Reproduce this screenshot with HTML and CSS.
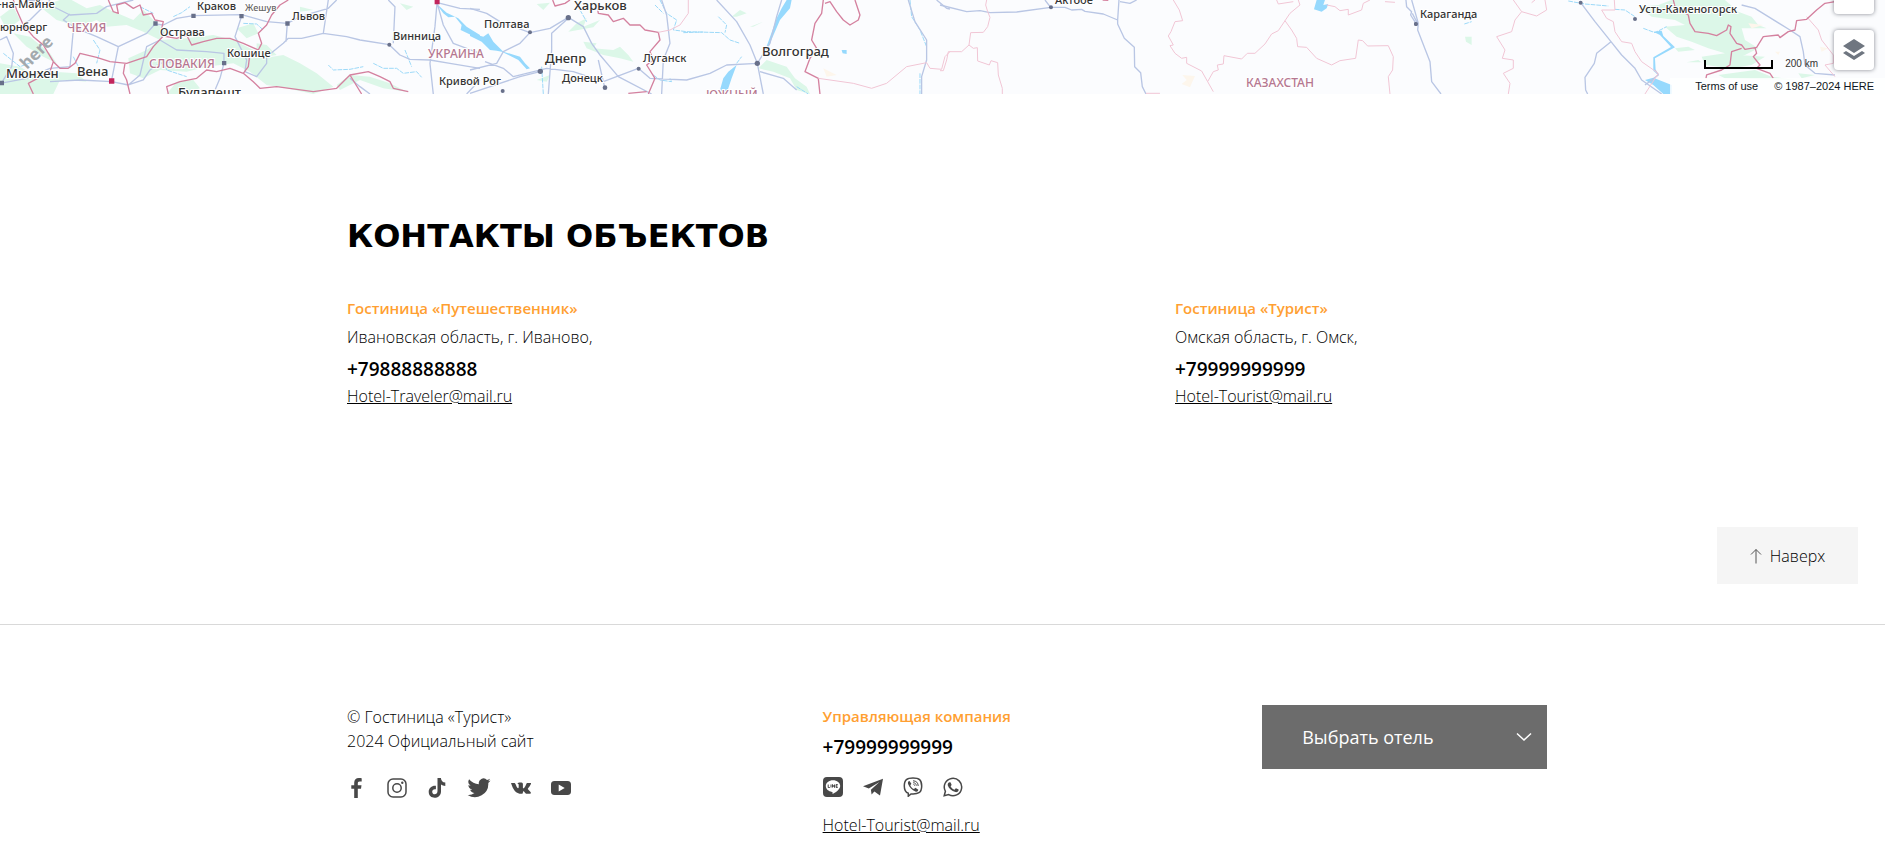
FILE: index.html
```html
<!DOCTYPE html>
<html lang="ru">
<head>
<meta charset="utf-8">
<title>Контакты объектов</title>
<link rel="stylesheet" href="styles.css">
</head>
<body>
<section class="map" aria-label="Карта">
  <svg class="map-canvas" viewBox="0 0 1885 94" preserveAspectRatio="xMinYMin slice">
    <!-- Central Europe -->
    <g transform="scale(.3333)">
      <g class="land">
        <path d="M0 50L40 20 60 60 20 90ZM120 20L180 0H215L260 25 300 15 330 30 400 60 430 30 470 70 500 95 480 120 430 95 380 75 320 80 290 60 240 80 170 60ZM40 100L90 110 150 160 170 190 130 170 80 140ZM0 190L60 200 110 230 160 215 230 220 260 245 200 240 130 250 100 282H0ZM100 245L180 240 160 282H95ZM385 175L440 150 480 120 560 115 640 105 700 120 760 150 790 175 850 165 900 190 950 220 1000 260 940 282 860 265 800 255 750 215 700 190 620 200 560 215 480 210 430 235 390 220ZM710 85L760 70 775 100 740 115ZM770 130L800 135 830 165 770 175ZM1010 255L1050 225 1110 230 1170 250 1220 275 1150 265 1080 240 1020 270ZM530 245L580 240 600 265 550 282H500ZM900 20L940 30 900 35ZM1200 10L1240 20 1220 30Z"/>
      </g>
      <g class="water-line"><path d="M520 50L545 38 570 20M730 70L770 72 790 90M985 195L1000 210 1050 208 1090 200M1120 190L1150 205 1190 205 1210 220 1250 215 1265 232M280 120L300 150 290 190M220 170L240 210M420 20L460 40M490 180L500 210 560 230M10 160L60 200 100 185M1215 150L1235 200"/></g>
      <path class="water" d="M1308 10L1330 40 1345 52 1365 50 1385 75 1382 90 1440 118V105L1400 80 1375 55 1340 38Z"/>
      <g class="road">
        <path d="M0 85L40 90 90 60 130 20 150 0M80 0L130 5 180 30 210 45 290 40 320 20 400 0M210 42L190 60 230 85 290 110 355 140 440 100 465 72 490 75 530 55 580 47 725 44 765 55 800 65 862 70 900 50 985 25 1010 0M0 250L80 235 150 205 210 200 220 90M150 245L240 240 335 245 385 255 430 240 450 210 480 190 540 180M355 140L335 240M385 255L420 225 440 140 480 120 530 150 620 155 672 160 672 190 660 235 640 282M725 48L705 110 740 180 735 215 770 230 800 190 800 170 850 130 865 115 905 115 970 100 985 0M862 70L858 125M970 100L1040 110 1080 120 1168 134 1200 165 1230 178 1290 180 1350 190 1440 205M1180 130L1185 20 1165 0M1312 10L1330 75 1360 130 1440 160M1300 282L1290 190 1305 80 1312 0M1312 8L1380 25 1440 28M0 120L20 110 40 160 35 200 5 248M1400 282L1440 240M1050 235L1080 260 1110 282"/>
      </g>
      <g class="border">
        <path d="M40 0L50 30 70 75 100 110 130 135 160 185 180 205 205 205 225 190 240 160 290 172 330 185 380 190 440 170 460 140 490 108 485 85 490 65 465 60 455 40 430 45 420 15 400 25 375 8 350 15 355 40 340 35 325 0M375 190L370 220 380 240 390 282M160 185L150 215 85 250 100 282M490 108L530 115 560 105 575 135 610 125 650 115 690 115 730 130 775 150 785 130 775 100 800 75 815 45 840 15 865 0M775 150L750 160 745 200 730 220 690 205 650 215 620 210 590 235 540 245 500 260 505 282M730 220L760 245 780 265 830 260 940 275 1010 265 1050 225 1105 215 1140 230 1170 245 1180 265 1225 275M1050 225L1085 282"/>
      </g>
      <g class="city"><path d="M460 64h13v13h-13zM574 41h13v13h-13zM718 42h13v13h-13zM856 64h13v13h-13zM666 183h13v13h-13zM0 242h12v14H0z"/><circle cx="1168" cy="134" r="6"/></g>
      <path class="capital" d="M1304-4h15v17h-15zM327 235h16v16h-16z"/>
    </g>
    <!-- Ukraine and the Volga -->
    <g transform="translate(470 0) scale(.3333)">
      <path class="land" d="M200 12L240 8 220 30ZM295 95L320 70 350 55 340 80 390 60 370 82ZM340 125L380 130 370 145 430 150 450 140 475 165 490 185 450 175 400 165 350 145ZM865 205L890 180 950 200 975 235 1010 260 1020 282 980 270 960 235 910 215ZM785 50L810 30 830 40 800 50ZM840 80L880 65 850 80ZM200 240L240 225 230 245Z"/>
      <path class="sand" d="M1060 205L1100 225 1070 230Z"/>
      <path class="water" d="M0 98L40 110 55 100 70 125 100 155 150 170 165 190 180 205 170 208 145 180 95 155 80 152 60 150 35 125 0 108ZM920 55L935 25 950 0H965L960 25 930 60 900 130 880 165 895 125ZM750 270L760 235 775 215 800 195 785 235 770 280H755ZM1115 150L1130 150 1130 162 1118 160Z"/>
      <path class="water-line" d="M570 0L590 40 620 60 610 90 650 95 755 98 780 120 810 130M330 30L350 65M215 200L220 282M555 15L580 40M550 225L570 240 605 245 600 235M800 190L815 170M640 98L700 96M745 50L770 75 765 98M1320 0L1325 50 1350 90 1370 140M1350 220L1350 282M980 260L1015 282"/>
      <path class="road" d="M0 25L50 40 90 65 180 98 240 85 295 52 340 80 365 130 390 165 445 230 545 282M295 55L245 100 245 150 235 282M180 98L150 130 100 155 80 190 0 210M45 185L100 205 130 230 230 205 310 215 400 245 505 205 540 235 650 240 720 220 770 195 862 190 840 135 800 65 740 0M862 190L880 282M862 190L900 130 920 50 935 0M400 245L385 180M405 265L400 245M210 215L150 230 0 280M575 282L580 180 600 130 590 45 575 0M870 215L940 235 980 270M1315 0L1335 65 1370 120 1370 180 1355 230 1355 282M1400 0L1430 25 1440 27"/>
      <path class="border" d="M248 0L255 18 285 10 300 0M380 10L385 40 415 45 430 65 460 55 480 75 510 75 525 90 565 97 570 120 540 155 550 180 530 195 555 235 535 282M475 280L530 275M1060 0L1055 40 1035 70 1025 120 1040 145 1020 175 1005 215 1045 235 1050 282M1065 10L1080 5 1100 35 1120 60 1140 75 1165 60 1170 45 1155 0"/>
      <path class="region" d="M565 97L600 90 630 75 655 40 655 0M1045 235L1150 250 1205 265 1250 250 1310 200 1370 188 1380 205 1415 208 1425 170 1440 155"/>
      <g class="city"><circle cx="295" cy="53" r="8"/><circle cx="180" cy="97" r="6"/><circle cx="211" cy="214" r="8"/><circle cx="506" cy="206" r="6"/><circle cx="405" cy="263" r="7"/><circle cx="98" cy="273" r="6"/><circle cx="862" cy="190" r="8"/></g>
    </g>
    <!-- Western Kazakhstan -->
    <g transform="translate(940 0) scale(.3333)">
      <path class="sand" d="M727 225L765 228 750 262 725 252 740 240Z"/>
      <path class="water" d="M1130 0H1155L1150 15 1165 12 1160 25 1145 35 1122 28Z"/>
      <path class="road" d="M0 15L80 35 120 32 150 38 230 36 332 22 375 22 395 30 425 28 435 34 490 42 533 60 537 0M540 5L570 10 590 0M533 60L533 72 553 115 583 142 584 200 602 218 607 260 618 282M315 0L332 22M1398 0L1400 20 1415 35 1412 45 1428 70"/>
      <path class="region" d="M140 0L137 15 143 35 150 52 143 80 130 97 92 98 87 135 65 155 25 155 20 180 10 212H0M87 135L100 145 112 143 113 183 148 195 153 182 173 188 175 225 187 265 187 282M618 280H660M700 0L718 30 728 62 705 65 693 95 685 108 700 135 690 137 705 160 725 175 740 172 740 190 785 213 803 245 820 275M803 245L820 215 835 210 832 195 850 192 852 167 905 177 922 160 945 160 975 132 995 102 1015 92 1050 40 1080 15 1075 0M1010 0L1015 12 1060 5M1035 62L1055 90 1070 115 1073 140 1100 142 1130 175 1175 195 1200 182 1247 175 1255 120 1268 122 1283 138 1345 137 1360 170 1358 210 1345 230 1350 282M1160 15L1185 20 1200 32 1225 28 1225 45 1265 30 1270 10 1290 0M1335 5L1365 7"/>
      <path class="border" d="M488 0L505 1"/>
      <g class="city"><circle cx="333" cy="22" r="6"/><circle cx="1428" cy="72" r="6"/></g>
    </g>
    <!-- Eastern Kazakhstan and Altai -->
    <g transform="translate(1405 0) scale(.3333)">
      <path class="land" d="M700 20L760 15 800 0H960L1000 35 1040 50 1060 75 1085 85 1010 85 1020 120 1060 145 1020 165 980 175 960 160 910 145 860 125 815 110 780 80 840 75 810 60 740 50ZM180 110L200 110 200 135 183 125ZM810 145L850 140 870 150 820 155ZM890 170L960 160 1000 165 1080 170 1040 195 980 205 900 195ZM940 225L1050 210 1100 230 1170 240 960 235ZM845 187L880 180 890 187ZM1180 220L1230 225 1190 235Z"/>
      <path class="sand" d="M1030 70L1075 75 1040 85ZM1110 155L1125 155 1120 165ZM1245 140L1270 145 1250 155Z"/>
      <path class="water" d="M720 240L745 233 800 255V282H775L745 255ZM745 95L770 92 775 108 810 142 750 175 752 210 760 225 745 212V172L798 141 765 105Z"/>
      <path class="water-line" d="M178 72L200 65M490 3L540 12 610 18M630 28L660 30 690 50M715 85L750 98 785 80"/>
      <path class="road" d="M20 0L40 70 38 90 75 185 80 245 108 282M22 40L40 75M527 8L570 65 618 125 650 165 690 205 710 240 770 282M618 125L575 160 568 190 540 232 542 270 548 282M720 255L760 225 750 210M1010 15L1050 25 1090 50 1155 90 1185 110 1195 155 1200 195 1230 220 1290 225"/>
      <path class="region" d="M325 0L350 35 395 48 425 30 420 0M350 35L330 60 320 95 275 110 300 150 292 175 325 180 325 205 295 220 315 250 310 282M390 0L380 8M628 0L630 30 590 30 605 55 625 65 630 95 650 125 680 130 690 155 710 185 760 220 720 282M1205 50L1240 90 1250 120 1285 165 1285 190 1260 195 1290 230"/>
      <path class="border" d="M805 0L810 20 850 45 855 70 870 95 910 100 935 107 965 90 970 75 978 80 975 100 995 130 1010 135 1020 148 1055 142 1075 110 1120 105 1125 113 1150 95 1170 90 1175 62 1205 58 1235 30 1260 10 1290 5M1010 145L980 155 975 195 950 210 905 225 903 235M1050 142L1055 160 1045 170 1065 195 1055 205 1095 220 1105 235"/>
      <g class="city"><circle cx="33" cy="72" r="6"/><circle cx="527" cy="8" r="6"/><circle cx="690" cy="57" r="6"/></g>
    </g>
    <g class="labels">
      <text class="mark" transform="translate(27 70) rotate(-45)">here</text>
      <g class="country"><text x="67" y="32">ЧЕХИЯ</text><text x="149" y="68">СЛОВАКИЯ</text><text x="428" y="58">УКРАИНА</text><text x="706" y="99">ЮЖНЫЙ</text><text x="1246" y="87">КАЗАХСТАН</text></g>
      <g class="town"><text x="-2" y="8">-на-Майне</text><text x="0" y="31">юрнберг</text><text x="197" y="10">Краков</text><text class="small" x="245" y="11">Жешув</text><text x="292" y="20">Львов</text><text x="160" y="36">Острава</text><text x="227" y="57">Кошице</text><text x="393" y="40">Винница</text><text x="439" y="85">Кривой Рог</text><text x="484" y="28">Полтава</text><text x="562" y="82">Донецк</text><text x="643" y="62">Луганск</text><text x="1055" y="4">Актобе</text><text x="1420" y="18">Караганда</text><text x="1639" y="13">Усть-Каменогорск</text></g>
      <g class="metro"><text x="6" y="78">Мюнхен</text><text x="77" y="76">Вена</text><text x="178" y="97">Будапешт</text><text x="574" y="10">Харьков</text><text x="545" y="63">Днепр</text><text x="762" y="56">Волгоград</text></g>
    </g>
  </svg>
  <div class="map-controls">
    <button class="map-button" type="button" aria-label="Масштаб"></button>
    <button class="map-button" type="button" aria-label="Слои">
      <svg width="22" height="22" viewBox="0 0 22 22"><path fill="#6f7680" d="M11 0L22 7 11 14 0 7ZM3 12L11 17 19 12 22 14 11 21 0 14Z"/></svg>
    </button>
  </div>
  <div class="map-scale"><span class="scale-bar"></span><span>200 km</span></div>
  <div class="map-legal"><a href="#terms">Terms of use</a><span>© 1987–2024 HERE</span></div>
</section>

<main class="contacts">
  <div class="container">
    <h1 class="title">КОНТАКТЫ ОБЪЕКТОВ</h1>
    <div class="hotels">
      <section class="card">
        <h2 class="name">Гостиница «Путешественник»</h2>
        <p class="address">Ивановская область, г. Иваново,</p>
        <a class="phone" href="tel:+79888888888">+79888888888</a>
        <a class="mail" href="mailto:Hotel-Traveler@mail.ru">Hotel-Traveler@mail.ru</a>
      </section>
      <section class="card">
        <h2 class="name">Гостиница «Турист»</h2>
        <p class="address">Омская область, г. Омск,</p>
        <a class="phone" href="tel:+79999999999">+79999999999</a>
        <a class="mail" href="mailto:Hotel-Tourist@mail.ru">Hotel-Tourist@mail.ru</a>
      </section>
    </div>
  </div>
  <div class="up-row">
    <button class="up" type="button">
      <svg width="12" height="16" viewBox="0 0 12 16" fill="none" stroke="#555"><path d="M6 15.500V1.500M1 6.500L6 1.500 11 6.500"/></svg>
      Наверх
    </button>
  </div>
</main>

<footer class="footer">
  <div class="container footer-grid">
    <div class="about">
      <p class="copyright">© Гостиница «Турист»<br>2024 Официальный сайт</p>
      <nav class="icons" aria-label="Социальные сети">
        <a href="#facebook" aria-label="Facebook"><svg viewBox="0 0 20 20"><path d="M7.200 20v-9.200H4.300V7.300h2.900V4.700C7.200 1.600 9 0 11.800 0c1.400 0 2.600.1 2.900.2v3.200h-2c-1.600 0-1.900.8-1.900 1.900v2h3.700l-.5 3.500h-3.200V20z"/></svg></a>
        <a href="#instagram" aria-label="Instagram"><svg viewBox="0 0 20 20"><rect x="1" y="1" width="18" height="18" rx="5" class="line"/><circle cx="10" cy="10" r="4.200" class="line"/><circle cx="15.300" cy="4.700" r="1.200"/></svg></a>
        <a href="#tiktok" aria-label="TikTok"><svg viewBox="0 0 20 20"><path d="M10.500 0h3.400c.2 2.700 1.800 4.400 4.400 4.600v3.400c-1.700 0-3.100-.5-4.300-1.400v6.800c0 8.100-12.300 8.700-12.300.4 0-4 3.500-6.600 7.200-6.100v3.600c-2-.6-3.700.6-3.700 2.400 0 3.500 5.300 3.600 5.300-.6z"/></svg></a>
        <a class="wide" href="#twitter" aria-label="Twitter"><svg viewBox="0 0 24 20"><path d="M23.500 2.600c-.8.4-1.700.6-2.600.7A4.700 4.700 0 0 0 23 .8a9 9 0 0 1-3 1.100A4.750 4.750 0 0 0 11.900 6.200 13.400 13.400 0 0 1 2.100 1.200a4.700 4.700 0 0 0 1.500 6.300 4.700 4.700 0 0 1-2.200-.6c0 2.300 1.600 4.300 3.800 4.700-.7.200-1.400.2-2.100.1.600 1.900 2.400 3.200 4.400 3.300A9.500 9.500 0 0 1 .6 17a13.400 13.400 0 0 0 20.700-12c.9-.6 1.600-1.400 2.200-2.400z"/></svg></a>
        <a href="#vk" aria-label="ВКонтакте"><svg viewBox="0 0 20 20"><path d="M0 4.900h3.100c.8 0 1.100.4 1.400 1.200.6 1.700 1.700 4 2.500 4.200.6.100.7-.6.700-1.700V7.100c0-1.100-.6-1.200-1.300-1.500.5-.8 1.500-1 2.900-1 1.500 0 2.600.1 2.600 1.500v3.400c0 1 .6 1.100 1.200.4.900-1 1.600-2.300 2.100-3.700.3-.9.600-1.300 1.400-1.300h2.800c.8 0 .7.700.4 1.400-.7 1.600-1.800 2.800-2.700 4-.4.600-.3.800.1 1.300l2.100 2.200c1.100 1.300.8 2-.5 2h-2.900c-.9 0-1.500-.6-2.100-1.400-1.100-1.300-1.900-1.500-1.900 0 0 .9-.4 1.400-1.300 1.400C4.800 15.800 2 11.400 0 4.900z"/></svg></a>
        <a href="#youtube" aria-label="YouTube"><svg viewBox="0 0 20 20"><path fill-rule="evenodd" d="M3.500 3h13C19 3 20 4.300 20 6.500v7c0 2.200-1 3.500-3.500 3.500h-13C1 17 0 15.700 0 13.500v-7C0 4.300 1 3 3.500 3zM7.700 6.500v7l6-3.500z"/></svg></a>
      </nav>
    </div>
    <div class="company">
      <h2 class="name">Управляющая компания</h2>
      <a class="phone" href="tel:+79999999999">+79999999999</a>
      <nav class="icons" aria-label="Мессенджеры">
        <a href="#line" aria-label="LINE"><svg viewBox="0 0 20 20"><path fill-rule="evenodd" d="M4 0h12c2.700 0 4 1.300 4 4v12c0 2.700-1.300 4-4 4H4c-2.700 0-4-1.300-4-4V4c0-2.700 1.300-4 4-4zM10 3.200c-4 0-7.200 2.500-7.200 5.900 0 3 2.700 5.400 6.200 5.800.9.100.6 1 .5 2.200 2.500-1.100 7.700-4.400 7.700-8 0-3.400-3.200-5.900-7.200-5.900z"/><path class="thin" d="M5.200 7.500v3h1.600M8 7.500v3M9.500 10.500v-3l2 3v-3M14.700 7.500h-1.600v3h1.600M13.100 9h1.500"/></svg></a>
        <a href="#telegram" aria-label="Telegram"><svg viewBox="0 0 20 20"><path d="M20 1.800L17 18.600 11.400 14.500 8.600 17.600 7.900 12.700 16.400 4.900 5.800 11.600 0 9.300Z"/></svg></a>
        <a href="#viber" aria-label="Viber"><svg viewBox="0 0 20 20"><path class="line" d="M10 1C4 1 1.300 2.500 1.300 9c0 4.200 1 6.300 4 7.300V19.200L8 16.900c7 .5 10.700-1 10.700-7.900C18.700 2.500 16 1 10 1z"/><path d="M6.500 4L8.400 6.800 7.300 8.300c.6 1.900 1.800 3.100 3.700 3.800l1.400-1.300 2.900 2c-.2 1.700-1.500 2.300-2.900 1.700-3.300-1.500-6-4.100-7.300-7.500C4.600 5.600 5.100 4.200 6.500 4z"/><path class="thin" d="M10 3.800c3.200 0 5.200 2 5.200 5.200M10.200 5.700c2 .1 3 1.200 3.100 3M10.500 7.400c.8.100 1 .5 1.100 1.200"/></svg></a>
        <a href="#whatsapp" aria-label="WhatsApp"><svg viewBox="0 0 20 20"><path class="line" d="M1.200 18.800L2.400 14.300A8.700 8.700 0 1 1 5.700 17.600Z"/><path d="M6.900 5.200c.4 0 .6.100.8.500l.8 1.900c.1.300 0 .6-.2.900l-.7.800c.9 1.700 2.200 2.800 4 3.500l1-1.200c.2-.3.500-.3.800-.2l1.900.9c.4.200.4.500.3 1-.3 1.500-1.900 2.100-3.200 1.800-3.900-1-6.400-3.600-7.600-6.600-.4-1.600.5-3.300 2.100-3.300z"/></svg></a>
      </nav>
      <a class="mail" href="mailto:Hotel-Tourist@mail.ru">Hotel-Tourist@mail.ru</a>
    </div>
    <div class="picker">
      <select class="picker-select" aria-label="Выбрать отель">
        <option>Выбрать отель</option>
        <option>Гостиница «Путешественник»</option>
        <option>Гостиница «Турист»</option>
      </select>
      <svg class="chevron" width="16" height="10" viewBox="0 0 16 10" fill="none" stroke="#fff" stroke-width="1.500"><path d="M1 1.500L8 8 15 1.500"/></svg>
    </div>
  </div>
</footer>
</body>
</html>
```
FILE: styles.css
```css
* { box-sizing: border-box; }
body {
  margin: 0;
  background: #fff;
  color: #000;
  font: 300 16px/24px "Open Sans", "Noto Sans", sans-serif;
}
h1, h2, p { margin: 0; }
a { color: inherit; text-decoration: none; }
button, select { font: inherit; border: 0; cursor: pointer; }

.map { position: relative; height: 94px; overflow: hidden; background: #fbfcfe; }
.map-canvas { display: block; width: 100%; height: 100%; }
.land { fill: #dcf7e8; }
.sand { fill: #fdf6ec; }
.water { fill: #96d9fd; }
.water-line, .road, .border, .region { fill: none; stroke-linejoin: round; }
.water-line { stroke: #9cd9f8; stroke-width: 3; stroke-dasharray: 14 3; }
.road { stroke: #b9c6e4; stroke-width: 4; }
.border { stroke: #d4819f; stroke-width: 4; }
.region { stroke: #f1c6d5; stroke-width: 3; }
.city { fill: #68708a; }
.capital { fill: #c2255c; }
.labels { font-family: "Noto Sans", sans-serif; font-weight: 500; fill: #333; stroke: #fff; stroke-width: 2px; paint-order: stroke; }
.town { font-size: 11px; }
.town .small { font-size: 9px; fill: #666; }
.metro { font-size: 13px; }
.country { font-size: 12px; fill: #b57790; }
.mark { font-size: 17px; font-weight: 700; fill: #a3a9ad; stroke: none; }

.map-controls { position: absolute; right: 11px; bottom: 24px; display: grid; gap: 16px; }
.map-button { display: grid; place-items: center; width: 40px; height: 40px; padding: 0; border-radius: 4px; background: #fff; box-shadow: 0 0 4px rgba(15, 22, 33, .5); }
.map-scale { position: absolute; right: 67px; bottom: 22px; display: flex; align-items: center; gap: 12px; font: 10px/16px "Liberation Sans", Arial, sans-serif; color: #333; }
.scale-bar { width: 69px; height: 9px; border: 2px solid #000; border-top: 0; }
.map-legal { position: absolute; right: 0; bottom: 0; display: flex; gap: 16px; padding: 0 11px 0 25px; background: rgba(255, 255, 255, .8); font: 11px/16px "Liberation Sans", Arial, sans-serif; color: #0f1621; }

.container { max-width: 1209px; margin: 0 auto; padding-left: 9px; }
.contacts { padding: 118px 0 40px; border-bottom: 1px solid #d9d9d9; }
.title { font: 700 32px/48px "DejaVu Sans", Verdana, sans-serif; }
.hotels { display: grid; grid-template-columns: 69% 31%; margin-top: 37px; }
.card, .company { display: flex; flex-direction: column; align-items: flex-start; }
.name { font-size: 15px; line-height: 22px; font-weight: 600; color: #ff9f32; }
.address { margin-top: 6px; }
.phone { margin-top: 5px; font-size: 19px; line-height: 30px; font-weight: 600; }
.mail { text-decoration: underline; }

.up-row { display: flex; justify-content: flex-end; padding-right: 27px; margin-top: 119px; }
.up { display: flex; align-items: center; justify-content: center; gap: 8px; width: 141px; height: 57px; background: #f5f5f5; color: #000; }

.footer { padding: 80px 0 20px; }
.footer-grid { display: grid; grid-template-columns: 476fr 440fr 285fr; align-items: start; }
.icons { display: flex; gap: 20px; }
.icons a { width: 20px; height: 20px; }
.icons .wide { width: 24px; }
.icons svg { display: block; width: 100%; height: 100%; fill: #484848; }
.icons .line { fill: none; stroke: #484848; stroke-width: 1.500; }
.icons .thin { fill: none; stroke: #484848; stroke-width: 1; }
.about .icons { margin-top: 25px; }
.company .icons { margin: 15px 0 16px; }
.picker { position: relative; }
.picker-select { display: block; width: 100%; height: 64px; padding: 0 40px; appearance: none; border-radius: 0; background: #6c6c6c; color: #fff; font-size: 18px; font-weight: 400; }
.chevron { position: absolute; right: 15px; top: 27px; pointer-events: none; }
```
